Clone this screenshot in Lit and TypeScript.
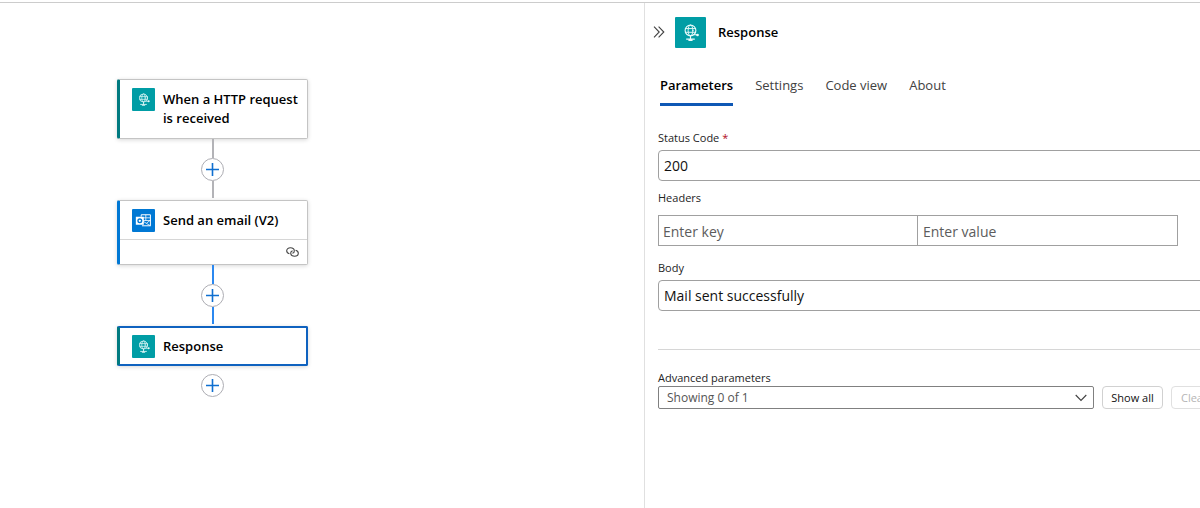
import { LitElement, html, css, svg } from "lit";
import { customElement, property } from "lit/decorators.js";

const globe = svg`
  <g fill="none" stroke="#e8fafa" stroke-width="1.1" stroke-linecap="round">
    <circle cx="15" cy="13" r="5.2"></circle>
    <ellipse cx="15" cy="13" rx="2.3" ry="5.2" stroke-width=".9"></ellipse>
    <path d="M10 11.2h10M10 14.8h10" stroke-width=".9"></path>
    <path d="M15 18.4v3M11.2 21.4h7.6M13.4 22.6h3.2M18.4 17.2h3"></path>
  </g>
  <circle cx="21.8" cy="17.4" r="1.3" fill="#e8fafa"></circle>`;

const outlook = svg`
  <g fill="none" stroke="#fff" stroke-width="1.3">
    <path d="M12 10V7.5h12v14.4H13"></path>
    <path d="M12 11.5h12M18 7.5v7.5M12 15h12M14.5 16l9.5 5.9M24 14.5l-5 4" stroke-width="1"></path>
  </g>
  <path d="M5 10.2h10.4v10.4H5z" fill="#fff"></path>
  <circle cx="10.2" cy="15.4" r="2.4" fill="none" stroke="#0078d4" stroke-width="1.8"></circle>`;

@customElement("connector-icon")
export class ConnectorIcon extends LitElement {
  @property() kind = "request";

  static styles = css`
    :host { display: block; flex: none; width: 23px; height: 23px; }
    svg { display: block; width: 100%; height: 100%; border-radius: 1px; }
    .request { background: #009da5; }
    .outlook { background: #0078d4; }
  `;

  render() {
    return html`<svg class=${this.kind} viewBox="0 0 30 30" aria-hidden="true">
      ${this.kind === "outlook" ? outlook : globe}
    </svg>`;
  }
}

@customElement("flow-link")
export class FlowLink extends LitElement {
  @property({ type: Boolean, reflect: true }) active = false;
  @property({ type: Boolean, reflect: true }) last = false;

  static styles = css`
    :host { display: flex; flex-direction: column; align-items: center; --line: #b3b3b7; }
    :host([active]) { --line: #2b88f0; }
    .top { width: 2px; height: 19px; background: var(--line); }
    .bottom { width: 2px; height: 17px; margin-bottom: 2px; background: var(--line); }
    :host([last]) .top { height: 8px; background: none; }
    :host([last]) .bottom { display: none; }
    .add {
      box-sizing: border-box; display: grid; place-items: center; width: 23px; height: 23px; padding: 0;
      border: 1px solid #adadb3; border-radius: 50%; background: #fff;
    }
    svg { display: block; }
  `;

  render() {
    return html`
      <span class="top"></span>
      <button class="add" aria-label="Add an action">
        <svg width="15" height="15" viewBox="0 0 15 15"><path d="M7.5 1v13M1 7.5h13" stroke="#0f6fd0" stroke-width="1.6"></path></svg>
      </button>
      <span class="bottom"></span>`;
  }
}

@customElement("flow-card")
export class FlowCard extends LitElement {
  @property() label = "";
  @property() kind = "request";
  @property({ type: Boolean, reflect: true }) selected = false;
  @property({ type: Boolean }) linked = false;

  static styles = css`
    :host { display: block; }
    .card {
      box-sizing: border-box; border: 1px solid #c4c4c4; border-left: 3px solid #007a80;
      border-radius: 2px; background: #fff; box-shadow: 0 1px 4px rgba(0, 0, 0, 0.16);
    }
    .outlook { border-left-color: #0078d4; }
    :host([selected]) .card {
      border-color: #0f62bf; border-width: 2px; border-left: 3px solid #007a80;
    }
    .head { display: flex; gap: 8px; padding: 8px 4px 10px 12px; }
    :host([selected]) .head { padding: 7px 4px 6px 12px; }
    .title {
      margin: 0; padding-top: 2px; font-size: 13px; line-height: 19px; font-weight: 570; color: #000;
    }
    .foot {
      display: flex; justify-content: flex-end; padding: 6px 8px;
      border-top: 1px solid #d6d6d6;
    }
    svg { display: block; }
    .linked .head { padding-bottom: 7px; }
  `;

  render() {
    return html`<article class="card ${this.kind} ${this.linked ? "linked" : ""}">
      <div class="head">
        <connector-icon kind=${this.kind}></connector-icon>
        <h3 class="title">${this.label}</h3>
      </div>
      ${this.linked
        ? html`<div class="foot">
            <svg width="13" height="12" viewBox="0 0 13 12" fill="none" stroke="#444" stroke-width="1.1" role="img" aria-label="Connection">
              <path d="M3.400 7.700C1.700 7.200.7 6.100.7 4.700C.7 3 2.300 1.800 4.300 1.800C6.500 1.800 8.300 3 8.300 4.900C8.300 6.200 7.500 7 6.400 7.300"></path>
              <path d="M9.600 4.300C11.300 4.800 12.300 5.900 12.300 7.300C12.300 9 10.700 10.200 8.700 10.200C6.500 10.200 4.700 9 4.700 7.100C4.700 5.800 5.500 5 6.600 4.700"></path>
            </svg>
          </div>`
        : ""}
    </article>`;
  }
}

@customElement("app-root")
export class AppRoot extends LitElement {
  static styles = css`
    :host {
      display: block; color: #242424; background: #fff;
      font-family: "Open Sans", "Noto Sans", sans-serif;
    }
    * { box-sizing: border-box; }
    button, input, select { font-family: inherit; }
    .page {
      display: grid; grid-template-columns: minmax(320px, 644fr) minmax(0, 556fr);
      min-height: calc(100vh - 2px); margin-top: 2px; border-top: 1px solid #ccc;
    }
    .page-wrap { display: flow-root; overflow: hidden; }
    .canvas { padding: 76px 0 0 117px; }
    .flow { width: 191px; }
    .panel { overflow: hidden; border-left: 1px solid #e0e0e0; padding: 13px 0 0 13px; }
    .body { width: 640px; }
    .header { display: flex; align-items: center; height: 32px; margin-left: -7px; }
    .collapse { display: grid; place-items: center; width: 16px; height: 16px; padding: 0; border: 0; background: none; }
    .logo { width: 31px; height: 31px; margin: 0 12px 0 8px; }
    .heading { margin: 0; font-size: 13px; line-height: 20px; font-weight: 570; color: #000; }
    .tabs { display: flex; gap: 22px; margin: 26px 0 24px 2px; }
    .tab {
      padding: 0 0 7px; border: 0; border-bottom: 3px solid transparent; background: none;
      font-size: 13px; line-height: 22px; color: #424242;
    }
    .tab.current { font-weight: 570; color: #000; border-bottom-color: #0f58b5; }
    .label { display: block; font-size: 11px; line-height: 16px; color: #242424; }
    .required { color: #b10e1c; }
    .field {
      display: block; width: 100%; height: 31px; margin-top: 4px; padding: 0 5px;
      border: 1px solid #a0a0a0; border-radius: 4px; background: #fff;
      font-size: 14px; color: #111;
    }
    .headers { margin: 9px 0 14px; padding: 0; border: 0; }
    .pair { display: grid; grid-template-columns: 260px 260px; margin-top: 9px; }
    .cell { width: 100%; height: 31px; margin: 0; padding: 2px 4px 0; border-radius: 0; }
    .cell + .cell { border-left: 0; padding-left: 5px; }
    .cell::placeholder { color: #5c5c5c; opacity: 1; }
    .rule { margin: 38px 0 20px; border: 0; border-top: 1px solid #d6d6d6; }
    .advanced { display: flex; gap: 8px; }
    .picker { display: grid; align-items: center; width: 436px; }
    .select {
      grid-area: 1 / 1; appearance: none; width: 100%; height: 23px; padding: 0 8px;
      border: 1px solid #808080; border-radius: 2px; background: #fff;
      font-size: 12px; color: #555; opacity: 1;
    }
    .chevron { grid-area: 1 / 1; justify-self: end; margin-right: 7px; pointer-events: none; }
    .action {
      height: 23px; padding: 0; width: 61px; border: 1px solid #d1d1d1; border-radius: 4px; background: #fff;
      font-size: 11px; line-height: 20px; color: #111;
    }
    .action:disabled { border-color: #e0e0e0; color: #b5b5b5; }
  `;

  render() {
    return html`<div class="page-wrap"><div class="page">
      <main class="canvas">
        <div class="flow">
          <flow-card label="When a HTTP request is received"></flow-card>
          <flow-link></flow-link>
          <flow-card label="Send an email (V2)" kind="outlook" linked></flow-card>
          <flow-link active></flow-link>
          <flow-card label="Response" selected></flow-card>
          <flow-link last></flow-link>
        </div>
      </main>
      <aside class="panel">
        <div class="body">
          <header class="header">
            <button class="collapse" aria-label="Collapse panel">
              <svg width="12" height="12" viewBox="0 0 12 12" fill="none" stroke="#424242" stroke-width="1.1"><path d="M1 .7 6.200 6 1 11.300M5.600.7 10.800 6 5.600 11.300"></path></svg>
            </button>
            <connector-icon class="logo"></connector-icon>
            <h2 class="heading">Response</h2>
          </header>
          <div class="tabs" role="tablist">
            <button class="tab current" role="tab" aria-selected="true">Parameters</button>
            <button class="tab" role="tab">Settings</button>
            <button class="tab" role="tab">Code view</button>
            <button class="tab" role="tab">About</button>
          </div>
          <label class="label" for="status">Status Code <span class="required">*</span></label>
          <input class="field" id="status" .value=${"200"} />
          <fieldset class="headers">
            <label class="label" for="key">Headers</label>
            <div class="pair">
              <input class="field cell" id="key" placeholder="Enter key" />
              <input class="field cell" aria-label="Header value" placeholder="Enter value" />
            </div>
          </fieldset>
          <label class="label" for="message">Body</label>
          <input class="field" id="message" .value=${"Mail sent successfully"} />
          <hr class="rule" />
          <label class="label" for="advanced">Advanced parameters</label>
          <div class="advanced">
            <div class="picker">
              <select class="select" id="advanced"><option>Showing 0 of 1</option></select>
              <svg class="chevron" width="12" height="8" viewBox="0 0 12 8" fill="none" stroke="#424242" stroke-width="1.1"><path d="M.7 1 6 6.500 11.300 1"></path></svg>
            </div>
            <button class="action">Show all</button>
            <button class="action" disabled>Clear all</button>
          </div>
        </div>
      </aside>
    </div></div>`;
  }
}
